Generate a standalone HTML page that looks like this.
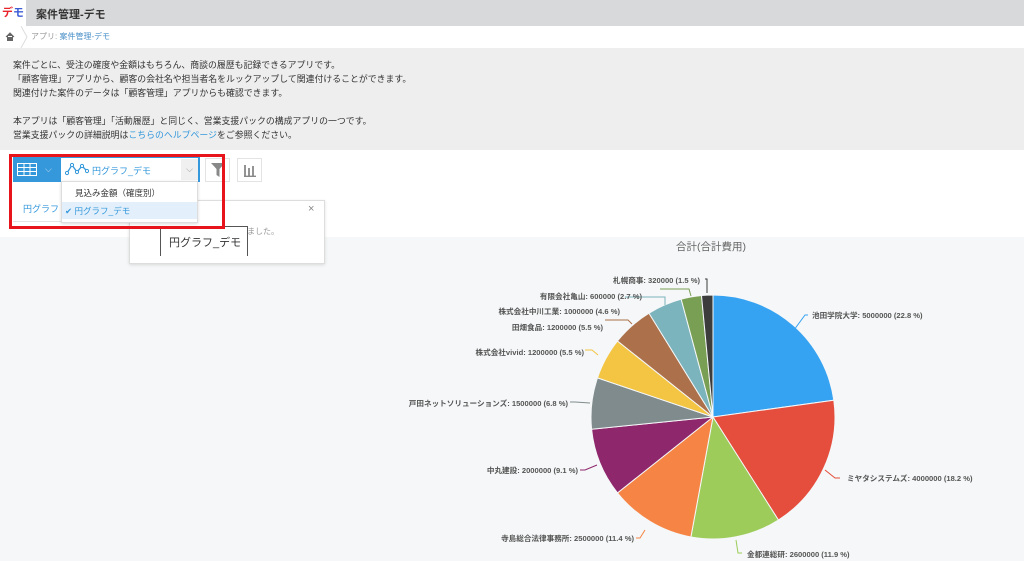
<!DOCTYPE html>
<html><head><meta charset="utf-8"><style>
*{margin:0;padding:0;box-sizing:border-box}
body{width:1024px;height:561px;overflow:hidden;font-family:"Liberation Sans","Noto Sans CJK JP",sans-serif;background:#f5f7f8;position:relative;color:#333}
.abs{position:absolute}
</style></head><body>
<div class="abs" style="left:0;top:0;width:1024px;height:26px;background:#d8d9da"></div>
<div class="abs" style="left:0;top:0;width:26px;height:26px;background:#fff;font-size:11px;font-weight:bold;line-height:26px;text-align:center"><span style="color:#e8232b">デ</span><span style="color:#3c5cd6">モ</span></div>
<div class="abs" style="left:36px;top:6px;font-size:11px;font-weight:bold;color:#333">案件管理-デモ</div>
<div class="abs" style="left:0;top:26px;width:1024px;height:22px;background:#fff"></div>
<svg class="abs" style="left:5px;top:32px" width="10" height="9"><path d="M1 5 L5 1 L9 5 M2.5 4 V8.5 H7.5 V4" fill="#666" stroke="#666"/></svg>
<svg class="abs" style="left:20px;top:26px" width="8" height="22"><path d="M1 0 L7 11 L1 22" fill="none" stroke="#ddd"/></svg>
<div class="abs" style="left:31px;top:31px;font-size:8px;color:#999">アプリ: <span style="color:#4a90c8">案件管理-デモ</span></div>
<div class="abs" style="left:0;top:48px;width:1024px;height:102px;background:#eeeeee"></div>
<div class="abs" style="left:13px;top:58px;font-size:8.9px;line-height:14px;color:#333">案件ごとに、受注の確度や金額はもちろん、商談の履歴も記録できるアプリです。<br>「顧客管理」アプリから、顧客の会社名や担当者名をルックアップして関連付けることができます。<br>関連付けた案件のデータは「顧客管理」アプリからも確認できます。<br><br>本アプリは「顧客管理」「活動履歴」と同じく、営業支援パックの構成アプリの一つです。<br>営業支援パックの詳細説明は<span style="color:#3498db">こちらのヘルプページ</span>をご参照ください。</div>
<div class="abs" style="left:0;top:150px;width:1024px;height:87px;background:#fff"></div>
<div class="abs" style="left:13px;top:157px;width:187px;height:25px;background:#3498db"></div>
<svg class="abs" style="left:17px;top:163px" width="20" height="13"><rect x="0.5" y="0.5" width="19" height="12" fill="none" stroke="#fff"/><path d="M0 4.5H20M0 8.5H20M7 0V13M13 0V13" stroke="#fff"/></svg>
<div class="abs" style="left:45px;top:164px;font-size:9px;color:#cde">⌵</div>
<div class="abs" style="left:61px;top:158px;width:137px;height:23px;background:#fff"></div>
<svg class="abs" style="left:65px;top:162px" width="24" height="14"><path d="M2 11 L7 3 L12 10 L17 4 L22 9" fill="none" stroke="#3498db" stroke-width="1.3"/><g fill="#fff" stroke="#3498db"><circle cx="2" cy="11" r="1.6"/><circle cx="7" cy="3" r="1.6"/><circle cx="12" cy="10" r="1.6"/><circle cx="17" cy="4" r="1.6"/><circle cx="22" cy="9" r="1.6"/></g></svg>
<div class="abs" style="left:92px;top:164px;font-size:9px;color:#3498db">円グラフ_デモ</div>
<div class="abs" style="left:181px;top:159px;width:17px;height:21px;background:#f0f0f0;font-size:9px;color:#999;text-align:center;line-height:21px">⌵</div>
<div class="abs" style="left:205px;top:158px;width:25px;height:24px;border:1px solid #e3e3e3;background:#fff"></div>
<svg class="abs" style="left:211px;top:163px" width="14" height="14"><path d="M0 0H14L8.5 6V14L5.5 12V6Z" fill="#888"/></svg>
<div class="abs" style="left:237px;top:158px;width:25px;height:24px;border:1px solid #e3e3e3;background:#fff"></div>
<svg class="abs" style="left:243px;top:163px" width="14" height="14"><path d="M2 2V13M6 5V13M10 3V13M1 13.5H13" stroke="#888" stroke-width="1.8"/></svg>
<div class="abs" style="left:13px;top:182px;width:187px;height:40px;border-bottom:1px solid #e3e3e3;background:#fff"></div>
<div class="abs" style="left:23px;top:202px;font-size:9px;color:#3498db">円グラフ</div>
<div class="abs" style="left:129px;top:200px;width:196px;height:64px;background:#fff;border:1px solid #ddd;box-shadow:0 1px 3px rgba(0,0,0,.12)"></div>
<div class="abs" style="left:308px;top:203px;font-size:11px;color:#888">×</div>
<div class="abs" style="left:247px;top:226px;font-size:8px;color:#999">ました。</div>
<div class="abs" style="left:160px;top:226px;width:88px;height:30px;background:#fff;border:1px solid #555;border-bottom:none"></div>
<div class="abs" style="left:169px;top:234px;font-size:11px;color:#333;white-space:nowrap">円グラフ_デモ</div>
<div class="abs" style="left:61px;top:181px;width:137px;height:42px;background:#fff;border:1px solid #ddd;box-shadow:0 1px 3px rgba(0,0,0,.15)"></div>
<div class="abs" style="left:75px;top:187px;font-size:8.5px;color:#333">見込み金額（確度別）</div>
<div class="abs" style="left:62px;top:202px;width:135px;height:17px;background:#e3f0fb"></div>
<div class="abs" style="left:65px;top:205px;font-size:8.5px;color:#3498db">✔ 円グラフ_デモ</div>
<div class="abs" style="left:9px;top:154px;width:216px;height:75px;border:3px solid #e8141c"></div>
<div class="abs" style="left:676px;top:239px;font-size:10.5px;color:#666">合計(合計費用)</div>
<svg class="abs" style="left:0;top:0" width="1024" height="561">
<g stroke="#f5f7f8" stroke-width="1">
<path d="M713 417 L713 295 A122 122 0 0 1 833.8 400.2 Z" fill="#36a2f2"/>
<path d="M713 417 L833.8 400.2 A122 122 0 0 1 778.4 520 Z" fill="#e54d3c"/>
<path d="M713 417 L778.4 520 A122 122 0 0 1 690.9 537 Z" fill="#9dcc5b"/>
<path d="M713 417 L690.9 537 A122 122 0 0 1 617.5 492.9 Z" fill="#f68545"/>
<path d="M713 417 L617.5 492.9 A122 122 0 0 1 591.6 429.2 Z" fill="#8e276b"/>
<path d="M713 417 L591.6 429.2 A122 122 0 0 1 597.5 377.9 Z" fill="#7f8b8c"/>
<path d="M713 417 L597.5 377.9 A122 122 0 0 1 617.5 341 Z" fill="#f3c543"/>
<path d="M713 417 L617.5 341 A122 122 0 0 1 649 313.2 Z" fill="#ac714b"/>
<path d="M713 417 L649 313.2 A122 122 0 0 1 681.2 299.2 Z" fill="#7cb4bd"/>
<path d="M713 417 L681.2 299.2 A122 122 0 0 1 701.5 295.5 Z" fill="#799f55"/>
<path d="M713 417 L701.5 295.5 A122 122 0 0 1 713 295 Z" fill="#3c3c3c"/>
</g>
<g fill="none" stroke-width="1">
<path d="M794 330 L805 315 H808" stroke="#36a2f2"/>
<path d="M825 470 L835 478 H840" stroke="#e54d3c"/>
<path d="M736 540 L738 553 H742" stroke="#9dcc5b"/>
<path d="M645 530 L640 538 H636" stroke="#f68545"/>
<path d="M597 465 L585 470 H580" stroke="#8e276b"/>
<path d="M590 403 L575 402 H570" stroke="#7f8b8c"/>
<path d="M598 355 L592 350 H585" stroke="#f3c543"/>
<path d="M632 324 L628 320 H605" stroke="#ac714b"/>
<path d="M665 305 L665 297 H625" stroke="#7cb4bd"/>
<path d="M691 296 L689 289 H660" stroke="#799f55"/>
<path d="M707 293 L707 279 H705" stroke="#3c3c3c"/>
</g>
<g font-family="Liberation Sans,Noto Sans CJK JP,sans-serif" font-size="7.6px" fill="#555" font-weight="bold">
<text x="812" y="318">池田学院大学: 5000000 (22.8 %)</text>
<text x="847" y="481">ミヤタシステムズ: 4000000 (18.2 %)</text>
<text x="747" y="557">金都連総研: 2600000 (11.9 %)</text>
<text x="634" y="541" text-anchor="end">寺島総合法律事務所: 2500000 (11.4 %)</text>
<text x="578" y="473" text-anchor="end">中丸建設: 2000000 (9.1 %)</text>
<text x="568" y="406" text-anchor="end">戸田ネットソリューションズ: 1500000 (6.8 %)</text>
<text x="584" y="355" text-anchor="end">株式会社vivid: 1200000 (5.5 %)</text>
<text x="603" y="330" text-anchor="end">田畑食品: 1200000 (5.5 %)</text>
<text x="620" y="314" text-anchor="end">株式会社中川工業: 1000000 (4.6 %)</text>
<text x="642" y="299" text-anchor="end">有限会社亀山: 600000 (2.7 %)</text>
<text x="700" y="283" text-anchor="end">札幌商事: 320000 (1.5 %)</text>
</g>
</svg>
</body></html>
